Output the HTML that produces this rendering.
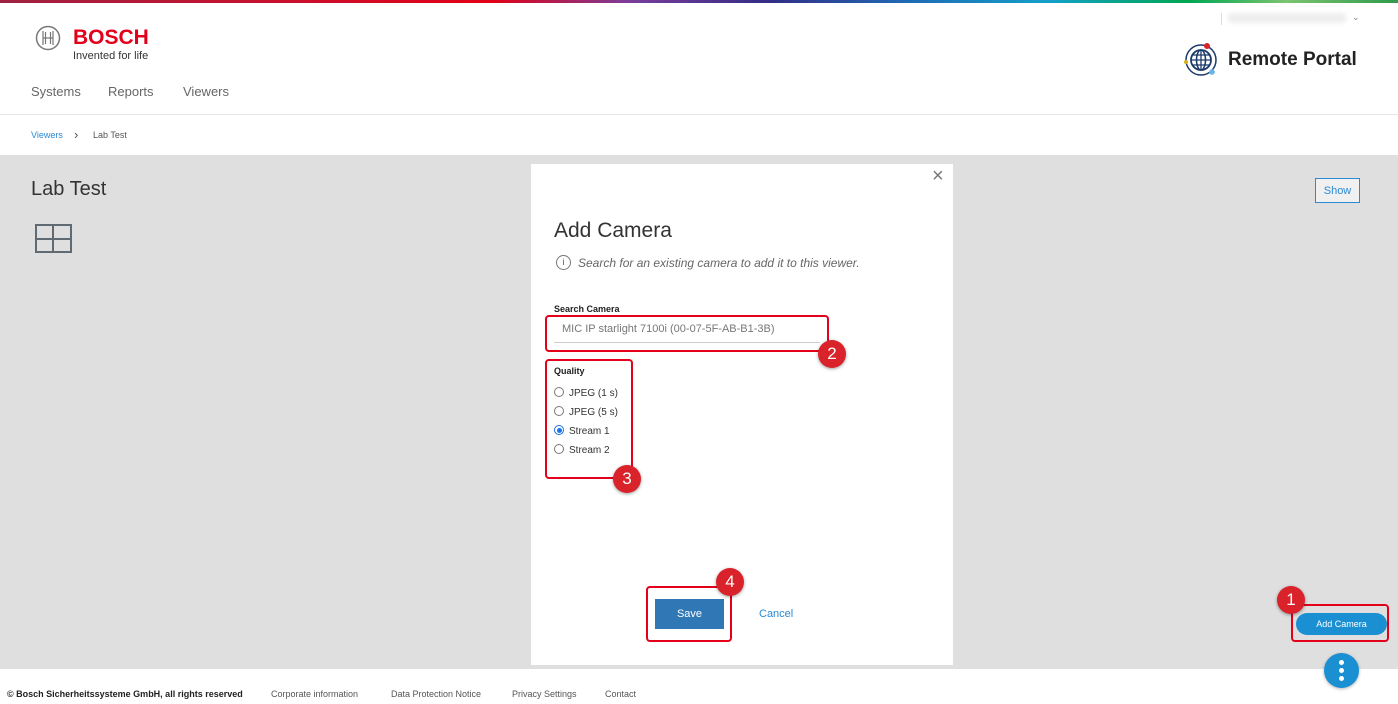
<!DOCTYPE html>
<html><head><meta charset="utf-8"><style>
*{box-sizing:border-box;margin:0;padding:0}
body{width:1398px;height:704px;position:relative;font-family:"Liberation Sans",sans-serif;background:#fff;overflow:hidden;color:#333}
.abs{position:absolute}
.bar{top:0;left:0;width:1398px;height:3px;background:linear-gradient(90deg,#9e2140 0%,#c8102e 20%,#e20015 35%,#7a3d9a 45%,#322d85 55%,#1e6bb5 65%,#14a0c8 75%,#00a651 85%,#7cc470 92%,#2f9a4a 100%)}
.nav{font-size:13px;color:#666;top:84px}
.red{border:2px solid #e2001a;border-radius:4px}
.badge{width:28px;height:28px;border-radius:50%;background:#d9222a;color:#fff;font-size:17px;text-align:center;line-height:28px;box-shadow:0 1px 3px rgba(0,0,0,.4)}
.radio{left:554px;font-size:10px;color:#333}
.radio i{display:inline-block;width:10px;height:10px;border:1px solid #777;border-radius:50%;vertical-align:-1px;margin-right:5px;position:relative}
.foot{top:689px;font-size:9px;color:#555}
</style></head><body>
<div class="abs bar"></div>
<svg class="abs" style="left:35px;top:25px" width="26" height="26" viewBox="0 0 26 26"><circle cx="13" cy="13" r="11.5" fill="none" stroke="#777" stroke-width="1.5"/><path d="M8 6v14M18 6v14M8 13h10M10.5 7v12M15.5 7v12" stroke="#777" stroke-width="1.2" fill="none"/></svg>
<div class="abs" style="left:73px;top:26px;font-size:21px;font-weight:bold;color:#e2001a">BOSCH</div>
<div class="abs" style="left:73px;top:50px;font-size:11px;color:#333">Invented for life</div>
<div class="abs nav" style="left:31px">Systems</div>
<div class="abs nav" style="left:108px">Reports</div>
<div class="abs nav" style="left:183px">Viewers</div>
<div class="abs" style="left:1221px;top:13px;width:1px;height:12px;background:#ddd"></div>
<div class="abs" style="left:1228px;top:13px;width:118px;height:10px;background:#eee;border-radius:3px;filter:blur(2px)"></div>
<div class="abs" style="left:1352px;top:12px;font-size:9px;color:#888">⌄</div>
<svg class="abs" style="left:1183px;top:42px" width="36" height="36" viewBox="0 0 36 36"><circle cx="18" cy="18" r="15" fill="none" stroke="#1b3a6b" stroke-width="1.5"/><circle cx="18" cy="18" r="10" fill="none" stroke="#1b3a6b" stroke-width="1.8"/><ellipse cx="18" cy="18" rx="4.5" ry="10" fill="none" stroke="#1b3a6b" stroke-width="1.5"/><path d="M8 18h20M18 8v20M10 13h16M10 23h16" stroke="#1b3a6b" stroke-width="1.3"/><circle cx="24" cy="4" r="3" fill="#d9222a"/><circle cx="3" cy="20" r="2" fill="#d4b21a"/><circle cx="29" cy="30" r="2.8" fill="#6ab5e8"/></svg>
<div class="abs" style="left:1228px;top:49px;font-size:19px;font-weight:bold;color:#222">Remote Portal</div>
<div class="abs" style="left:0;top:114px;width:1398px;height:1px;background:#e6e6e6"></div>
<div class="abs" style="left:31px;top:130px;font-size:9px;color:#2a8ad4">Viewers</div>
<div class="abs" style="left:74px;top:127px;font-size:13px;color:#555">›</div>
<div class="abs" style="left:93px;top:130px;font-size:9px;color:#555">Lab Test</div>
<div class="abs" style="left:0;top:155px;width:1398px;height:514px;background:#dfdfdf"></div>
<div class="abs" style="left:31px;top:178px;font-size:20px;color:#333">Lab Test</div>
<div class="abs" style="left:35px;top:224px;width:37px;height:29px;border:2px solid #5f6a72"></div>
<div class="abs" style="left:36px;top:238px;width:35px;height:2px;background:#5f6a72"></div>
<div class="abs" style="left:52px;top:225px;width:2px;height:27px;background:#5f6a72"></div>
<div class="abs" style="left:1315px;top:178px;width:45px;height:25px;border:1px solid #2a8ad4;font-size:11px;color:#2a8ad4;display:flex;align-items:center;justify-content:center;background:#f0f0f0">Show</div>
<div class="abs" style="left:531px;top:164px;width:422px;height:501px;background:#fff"></div>
<div class="abs" style="left:932px;top:165px;font-size:20px;color:#777">×</div>
<div class="abs" style="left:554px;top:219px;font-size:21px;color:#333">Add Camera</div>
<div class="abs" style="left:556px;top:255px;width:15px;height:15px;border:1px solid #777;border-radius:50%;font-size:9px;text-align:center;line-height:13px;color:#555">i</div>
<div class="abs" style="left:578px;top:256px;font-size:12px;color:#666;font-style:italic">Search for an existing camera to add it to this viewer.</div>
<div class="abs" style="left:554px;top:304px;font-size:9px;font-weight:bold;color:#222">Search Camera</div>
<div class="abs" style="left:562px;top:323px;font-size:11px;color:#777">MIC IP starlight 7100i (00-07-5F-AB-B1-3B)</div>
<div class="abs" style="left:554px;top:342px;width:266px;height:1px;background:#ccc"></div>
<div class="abs red" style="left:545px;top:315px;width:284px;height:37px"></div>
<div class="abs badge" style="left:818px;top:340px">2</div>
<div class="abs" style="left:554px;top:366px;font-size:9px;font-weight:bold;color:#222">Quality</div>
<div class="abs radio" style="top:387px"><i></i>JPEG (1 s)</div>
<div class="abs radio" style="top:406px"><i></i>JPEG (5 s)</div>
<div class="abs radio" style="top:425px"><i style="border-color:#1a73e8"><b style="position:absolute;left:2px;top:2px;width:5px;height:5px;border-radius:50%;background:#1a73e8"></b></i>Stream 1</div>
<div class="abs radio" style="top:444px"><i></i>Stream 2</div>
<div class="abs red" style="left:545px;top:359px;width:88px;height:120px"></div>
<div class="abs badge" style="left:613px;top:465px">3</div>
<div class="abs" style="left:655px;top:599px;width:69px;height:30px;background:#2f78b5;color:#fff;font-size:11px;text-align:center;line-height:30px">Save</div>
<div class="abs red" style="left:646px;top:586px;width:86px;height:56px"></div>
<div class="abs badge" style="left:716px;top:568px">4</div>
<div class="abs" style="left:759px;top:608px;font-size:11px;color:#2a8ad4">Cancel</div>
<div class="abs" style="left:1296px;top:613px;width:91px;height:22px;border-radius:11px;background:#1a8fd1;color:#fff;font-size:9px;text-align:center;line-height:22px">Add Camera</div>
<div class="abs red" style="left:1291px;top:604px;width:98px;height:38px"></div>
<div class="abs badge" style="left:1277px;top:586px">1</div>
<div class="abs" style="left:1324px;top:653px;width:35px;height:35px;border-radius:50%;background:#1a8fd1;box-shadow:0 1px 3px rgba(0,0,0,.3)"></div>
<div class="abs" style="left:1339px;top:660px;width:5px;height:5px;border-radius:50%;background:#fff;box-shadow:0 8px 0 #fff,0 16px 0 #fff"></div>
<div class="abs foot" style="left:7px;font-weight:bold;color:#222">© Bosch Sicherheitssysteme GmbH, all rights reserved</div>
<div class="abs foot" style="left:271px">Corporate information</div>
<div class="abs foot" style="left:391px">Data Protection Notice</div>
<div class="abs foot" style="left:512px">Privacy Settings</div>
<div class="abs foot" style="left:605px">Contact</div>
</body></html>
